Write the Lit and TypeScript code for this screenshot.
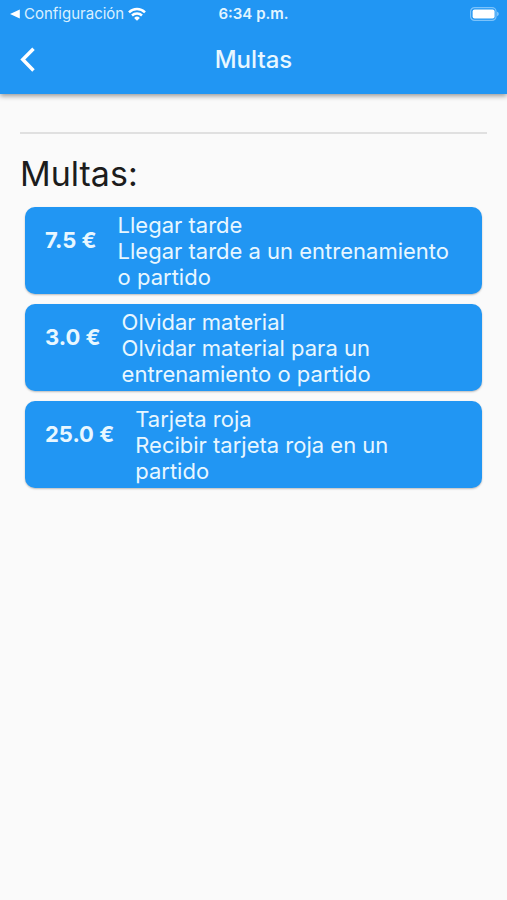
import { LitElement, html, css } from "lit";
import { customElement, property } from "lit/decorators.js";

interface Fine {
  amount: string;
  title: string;
  detail: string;
}

const FINES: Fine[] = [
  { amount: "7.5 €", title: "Llegar tarde", detail: "Llegar tarde a un entrenamiento o partido" },
  { amount: "3.0 €", title: "Olvidar material", detail: "Olvidar material para un entrenamiento o partido" },
  { amount: "25.0 €", title: "Tarjeta roja", detail: "Recibir tarjeta roja en un partido" },
];

@customElement("status-bar")
class StatusBar extends LitElement {
  static styles = css`
    :host {
      display: grid;
      grid-template-columns: 1fr auto 1fr;
      align-items: center;
      height: 28px;
      padding: 0 8px;
      font-size: 15px;
      line-height: 20px;
    }
    .return {
      display: flex;
      align-items: center;
      gap: 4px;
      padding-left: 2px;
      color: #d9f0ff;
      text-decoration: none;
    }
    .time {
      font-weight: 600;
      color: #e3f5ff;
    }
    .battery {
      justify-self: end;
    }
    svg {
      display: block;
      flex: none;
    }
  `;

  render() {
    return html`
      <a class="return" href="#configuracion">
        <svg width="10" height="10" viewBox="0 0 10 10" aria-hidden="true">
          <path d="M0 5 9.800 .6v8.800z" fill="#fff" />
        </svg>
        <span>Configuración</span>
        <svg width="18" height="14" viewBox="0 0 18 14" fill="none" stroke="#fff" stroke-width="2.500" aria-hidden="true">
          <path d="M1 5.300a11.600 11.600 0 0 1 16 0" />
          <path d="M4 8.500a7.300 7.300 0 0 1 10 0" />
          <path d="M9 13.700 6.100 10.900a4.200 4.200 0 0 1 5.800 0z" fill="#fff" stroke="none" />
        </svg>
      </a>
      <span class="time">6:34 p.m.</span>
      <svg class="battery" width="29" height="14" viewBox="0 0 29 14" role="img" aria-label="Batería">
        <rect x=".6" y=".6" width="25.400" height="12.800" rx="4" fill="none" stroke="#7cc3fb" stroke-width="1.200" />
        <rect x="2.600" y="2.500" width="22" height="9" rx="2" fill="#fff" />
        <path d="M27 4.800c2.400.6 2.400 3.800 0 4.400z" fill="#7cc3fb" />
      </svg>
    `;
  }
}

@customElement("fine-card")
class FineCard extends LitElement {
  @property({ attribute: false }) fine!: Fine;

  static styles = css`
    :host {
      display: flex;
      align-items: flex-start;
      gap: 21px;
      padding: 5px 20px 4px;
      border-radius: 10px;
      background: #2196f3;
      color: #e8f7ff;
      font-size: 22px;
      line-height: 26px;
      box-shadow: 0 1px 2px rgba(0, 0, 0, 0.25);
    }
    .amount {
      flex: none;
      margin-top: 15px;
      font-weight: 700;
    }
    .text {
      flex: 1;
      min-width: 0;
    }
    h2,
    p {
      margin: 0;
      font-size: inherit;
      font-weight: 400;
    }
  `;

  render() {
    return html`
      <span class="amount">${this.fine.amount}</span>
      <div class="text">
        <h2>${this.fine.title}</h2>
        <p>${this.fine.detail}</p>
      </div>
    `;
  }
}

@customElement("app-root")
class AppRoot extends LitElement {
  static styles = css`
    :host {
      display: block;
      box-sizing: border-box;
      min-height: 100vh;
      background: #fafafa;
      color: #1c1c1c;
      font-family: Inter, "Liberation Sans", sans-serif;
    }
    header {
      background: #2196f3;
      box-shadow: 0 2px 5px rgba(0, 0, 0, 0.4);
    }
    .toolbar {
      display: grid;
      grid-template-columns: 1fr auto 1fr;
      align-items: center;
      height: 66px;
      padding: 0 16px 2px;
      box-sizing: border-box;
    }
    .back {
      justify-self: start;
      padding: 4px;
      border: 0;
      background: none;
      cursor: pointer;
    }
    .back svg {
      display: block;
    }
    .title {
      margin: 0;
      color: #e8f7ff;
      font-size: 24px;
      line-height: 30px;
      font-weight: 500;
    }
    main {
      padding: 38px 20px 20px;
    }
    hr {
      height: 2px;
      margin: 0;
      border: 0;
      background: #e0e0e0;
    }
    .heading {
      margin: 20px 0 13px;
      font-size: 34px;
      line-height: 40px;
      font-weight: 400;
    }
    ul {
      display: flex;
      flex-direction: column;
      gap: 10px;
      margin: 0;
      padding: 0 5px;
      list-style: none;
    }
  `;

  render() {
    return html`
      <header>
        <status-bar></status-bar>
        <div class="toolbar">
          <button class="back" type="button" aria-label="Atrás">
            <svg width="16" height="26" viewBox="0 0 16 26" fill="none" stroke="#fff" stroke-width="3.500" aria-hidden="true">
              <path d="M13.500 1.800 2.800 12.600l10.700 10.800" />
            </svg>
          </button>
          <h1 class="title">Multas</h1>
        </div>
      </header>
      <main>
        <hr />
        <h2 class="heading">Multas:</h2>
        <ul>
          ${FINES.map((fine) => html`<li><fine-card .fine=${fine}></fine-card></li>`)}
        </ul>
      </main>
    `;
  }
}
